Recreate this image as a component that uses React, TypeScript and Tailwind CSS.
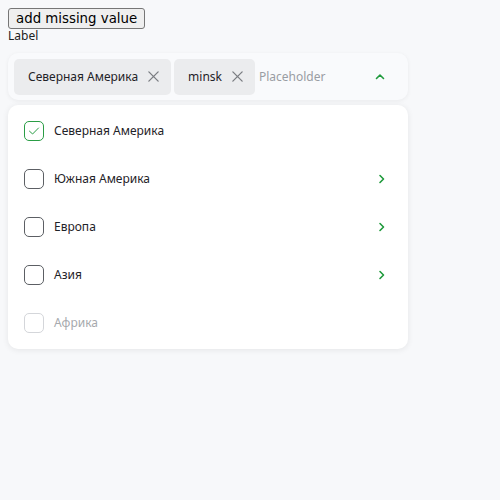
import React from 'react';

const Check = () => (
  <svg width="14" height="14" viewBox="0 0 14 14" fill="none">
    <path d="M2.5 7.2 5.6 10 11.5 4" stroke="#2a9d45" strokeWidth="1" strokeLinecap="round" strokeLinejoin="round" />
  </svg>
);

const Cross = () => (
  <svg width="13" height="13" viewBox="0 0 14 14" fill="none">
    <path d="M2 2l10 10M12 2 2 12" stroke="#7a7d82" strokeWidth="1.4" strokeLinecap="round" />
  </svg>
);

const ChevronRight = () => (
  <svg width="8" height="10" viewBox="0 0 8 10" fill="none">
    <path d="M2 1.5 5.5 5 2 8.5" stroke="#1f9a3c" strokeWidth="1.6" strokeLinecap="round" strokeLinejoin="round" />
  </svg>
);

const ChevronUp = () => (
  <svg width="10" height="8" viewBox="0 0 10 8" fill="none">
    <path d="M1.5 5.5 5 2l3.5 3.5" stroke="#1f9a3c" strokeWidth="1.6" strokeLinecap="round" strokeLinejoin="round" />
  </svg>
);

interface Option {
  label: string;
  checked?: boolean;
  disabled?: boolean;
  nested?: boolean;
}

const options: Option[] = [
  { label: 'Северная Америка', checked: true },
  { label: 'Южная Америка', nested: true },
  { label: 'Европа', nested: true },
  { label: 'Азия', nested: true },
  { label: 'Африка', disabled: true },
];

const chips = ['Северная Америка', 'minsk'];

export default function App() {
  return (
    <div className="min-h-[500px] bg-[#f7f8fa] p-2 font-['Noto_Sans',sans-serif] text-[#1f2328]">
      <button className="block rounded-[3px] border border-[#767676] bg-[#efefef] px-[7px] py-[1px] font-['DejaVu_Sans',sans-serif] text-[13.333px] leading-[17px] text-black">
        add missing value
      </button>
      <div className="text-[12px] leading-[14px] text-[#222]">Label</div>
      <div className="mt-[10px] w-[400px]">
        <div className="flex h-[47px] items-center rounded-[10px] bg-[#f9fafc] px-[6px] shadow-[0_1px_4px_rgba(0,0,0,0.06)]">
          <div className="flex gap-[3px]">
            {chips.map((c) => (
              <div key={c} className="flex h-[36px] items-center gap-[9px] rounded-[5px] bg-[#ebecee] pl-[14px] pr-[11px] text-[12px]">
                <span>{c}</span>
                <Cross />
              </div>
            ))}
          </div>
          <span className="ml-[4px] text-[12px] text-[#9a9da3]">Placeholder</span>
          <div className="ml-auto mr-[17px] flex">
            <ChevronUp />
          </div>
        </div>
        <div className="mt-[5px] rounded-[10px] bg-white py-[2px] shadow-[0_1px_6px_rgba(0,0,0,0.08)]">
          {options.map((o) => (
            <div key={o.label} className="flex h-[48px] items-center pl-[16px] pr-[22px]">
              <div
                className={
                  o.checked
                    ? 'flex h-[20px] w-[20px] items-center justify-center rounded-[5px] border border-[#2a9d45]'
                    : o.disabled
                      ? 'h-[20px] w-[20px] rounded-[5px] border border-[#d4d6da]'
                      : 'h-[20px] w-[20px] rounded-[5px] border border-[#5c5f64]'
                }
              >
                {o.checked && <Check />}
              </div>
              <span className={o.disabled ? 'ml-[10px] text-[12px] text-[#a6a9ad]' : 'ml-[10px] text-[12px]'}>{o.label}</span>
              {o.nested && (
                <div className="ml-auto flex">
                  <ChevronRight />
                </div>
              )}
            </div>
          ))}
        </div>
      </div>
    </div>
  );
}
